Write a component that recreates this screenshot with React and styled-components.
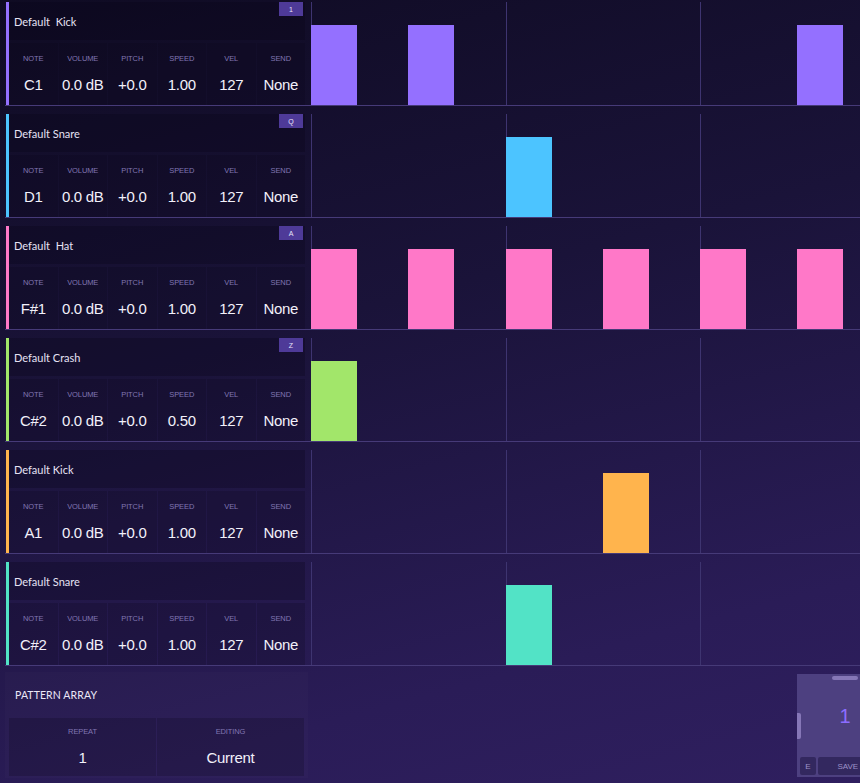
import React from "react";
import styled, { createGlobalStyle } from "styled-components";

const GlobalStyle = createGlobalStyle`
  html, body {
    margin: 0;
    width: 860px;
    height: 783px;
    overflow: hidden;
  }
  body {
    background: linear-gradient(165deg, #0f0b23 0%, #1a1339 40%, #2a1c57 80%, #2f1f5f 100%);
    font-family: "Lato", "Liberation Sans", sans-serif;
    color: #ece8f8;
  }
`;

// data
const tracks = [
  { name: "Default  Kick", key: "1", color: "#9470ff", note: "C1", speed: "1.00", steps: [0, 1, 5] },
  { name: "Default Snare", key: "Q", color: "#4cc4ff", note: "D1", speed: "1.00", steps: [2] },
  { name: "Default  Hat", key: "A", color: "#ff78c8", note: "F#1", speed: "1.00", steps: [0, 1, 2, 3, 4, 5] },
  { name: "Default Crash", key: "Z", color: "#a2e66a", note: "C#2", speed: "0.50", steps: [0] },
  { name: "Default Kick", color: "#ffb44d", note: "A1", speed: "1.00", steps: [3] },
  { name: "Default Snare", color: "#52e3c6", note: "C#2", speed: "1.00", steps: [2] },
];

const BEATS = 4;

const Page = styled.div`
  padding-top: 2px;
  width: 860px;
`;

const Rows = styled.div`
  display: flex;
  flex-direction: column;
  gap: 8px;
`;

const Row = styled.div`
  display: flex;
  height: 103px;
  margin-left: 5px;
  border-bottom: 1px solid #463a78;
`;

const TrackPanel = styled.div`
  display: flex;
  flex-shrink: 0;
  width: 304px;
  padding-left: 1px;
  box-sizing: border-box;
`;

const ColorBar = styled.div`
  width: 3px;
  flex-shrink: 0;
  background: ${(p) => p.$color};
`;

const TrackBody = styled.div`
  display: flex;
  flex-direction: column;
  width: 296px;
  gap: 3px;
`;

const Header = styled.div`
  position: relative;
  height: 38px;
  display: flex;
  align-items: center;
  padding-left: 5px;
  background: rgba(8, 5, 22, 0.28);
  font-size: 11px;
  color: #e6e2f4;
  white-space: pre;
`;

const KeyBadge = styled.div`
  position: absolute;
  top: 0;
  right: 2px;
  width: 24px;
  height: 14px;
  background: #4e3a98;
  color: #e8e4fa;
  font-family: "Liberation Sans", sans-serif;
  font-size: 7px;
  display: flex;
  align-items: center;
  justify-content: center;
`;

const Params = styled.div`
  flex: 1;
  display: grid;
  grid-template-columns: repeat(${(p) => p.$cols}, 1fr);
  gap: 1px;
`;

const Param = styled.div`
  display: flex;
  flex-direction: column;
  align-items: center;
  background: rgba(8, 5, 22, 0.22);
  padding-top: ${(p) => (p.$tight ? 9 : 11)}px;
`;

const Label = styled.div`
  font-family: "Liberation Sans Narrow", "Liberation Sans", sans-serif;
  font-size: 7.5px;
  color: #8176b2;
  text-transform: uppercase;
  letter-spacing: -0.1px;
`;

const Value = styled.div`
  margin-top: 13px;
  font-family: "Liberation Sans", sans-serif;
  font-size: 15px;
  letter-spacing: -0.3px;
  color: #f2f0fa;
`;

const Sequencer = styled.div`
  display: flex;
  margin-left: 2px;
  flex-shrink: 0;
`;

const Beat = styled.div`
  display: flex;
  width: 194.6px;
  flex-shrink: 0;
  border-left: 1px solid #3e3470;
  box-sizing: border-box;
`;

const Step = styled.div`
  flex: ${(p) => (p.$first ? "0 0 96.3px" : "1")};
  display: flex;
  align-items: flex-end;
`;

const Pad = styled.div`
  width: 46px;
  height: 80px;
  margin-left: ${(p) => (p.$first ? -1 : 0)}px;
  background: ${(p) => p.$color};
`;

const Bottom = styled.div`
  display: flex;
  margin-top: 6px;
  margin-left: 5px;
`;

const PatternPanel = styled.div`
  width: 303px;
  height: 106px;
  flex-shrink: 0;
  display: flex;
  flex-direction: column;
  padding: 0 4px 2px 4px;
  box-sizing: border-box;
  background: rgba(255, 255, 255, 0.015);
`;

const PanelTitle = styled.div`
  height: 46px;
  display: flex;
  align-items: center;
  padding-left: 6px;
  font-size: 10.5px;
  letter-spacing: 0.1px;
  color: #ece8f8;
`;

const ArrayCells = styled(Params)`
  flex: 1;
`;

const Widget = styled.div`
  position: relative;
  flex-shrink: 0;
  width: 96px;
  height: 103px;
  margin-top: 2px;
  margin-left: 489px;
  background: #4d4080;
  display: flex;
  flex-direction: column;
  align-items: center;
`;

const TopHandle = styled.div`
  width: 26px;
  height: 4px;
  margin-top: 2px;
  border-radius: 2px;
  background: #8677b7;
`;

const SideHandle = styled.div`
  position: absolute;
  left: 0;
  top: 39px;
  width: 4px;
  height: 26px;
  border-radius: 0 2px 2px 0;
  background: #8677b7;
`;

const PageNumber = styled.div`
  flex: 1;
  display: flex;
  align-items: center;
  font-family: "Liberation Sans", sans-serif;
  font-size: 20px;
  color: #8c6dff;
  padding-bottom: 5px;
`;

const WidgetButtons = styled.div`
  display: flex;
  gap: 2px;
  width: 100%;
  padding: 0 3px 2px 3px;
  box-sizing: border-box;
`;

const SmallButton = styled.div`
  height: 18px;
  flex: ${(p) => (p.$grow ? 1 : "0 0 16px")};
  border-radius: 2px;
  background: #33285f;
  color: #9d92c7;
  font-family: "Liberation Sans", sans-serif;
  font-size: 8px;
  display: flex;
  align-items: center;
  justify-content: center;
  white-space: nowrap;
`;

const TrackRow = ({ track }) => {
  const params = [
    ["Note", track.note],
    ["Volume", "0.0 dB"],
    ["Pitch", "+0.0"],
    ["Speed", track.speed],
    ["Vel", "127"],
    ["Send", "None"],
  ];

  return (
    <Row>
      <TrackPanel>
        <ColorBar $color={track.color} />
        <TrackBody>
          <Header>
            {track.name}
            {track.key && <KeyBadge>{track.key}</KeyBadge>}
          </Header>
          <Params $cols={6}>
            {params.map(([label, value]) => (
              <Param key={label}>
                <Label>{label}</Label>
                <Value>{value}</Value>
              </Param>
            ))}
          </Params>
        </TrackBody>
      </TrackPanel>
      <Sequencer>
        {Array.from({ length: BEATS }).map((_, b) => (
          <Beat key={b}>
            {[0, 1].map((s) => {
              const idx = b * 2 + s;
              return (
                <Step key={s} $first={s === 0}>
                  {track.steps.includes(idx) && (
                    <Pad $color={track.color} $first={s === 0} />
                  )}
                </Step>
              );
            })}
          </Beat>
        ))}
      </Sequencer>
    </Row>
  );
};

const App = () => {
  return (
    <>
      <GlobalStyle />
      <Page>
        <Rows>
          {tracks.map((t, i) => (
            <TrackRow key={i} track={t} />
          ))}
        </Rows>
        <Bottom>
          <PatternPanel>
            <PanelTitle>PATTERN ARRAY</PanelTitle>
            <ArrayCells $cols={2}>
              <Param $tight>
                <Label>Repeat</Label>
                <Value>1</Value>
              </Param>
              <Param $tight>
                <Label>Editing</Label>
                <Value>Current</Value>
              </Param>
            </ArrayCells>
          </PatternPanel>
          <Widget>
            <TopHandle />
            <SideHandle />
            <PageNumber>1</PageNumber>
            <WidgetButtons>
              <SmallButton>E</SmallButton>
              <SmallButton $grow>SAVE AS</SmallButton>
            </WidgetButtons>
          </Widget>
        </Bottom>
      </Page>
    </>
  );
};

export default App;
